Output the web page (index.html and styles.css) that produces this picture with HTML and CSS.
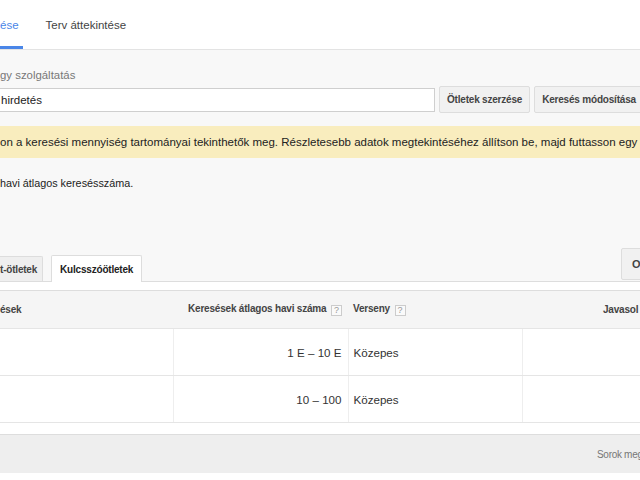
FILE: index.html
```html
<!DOCTYPE html>
<html lang="hu">
<head>
<meta charset="utf-8">
<title>Kulcsszótervező</title>
<link rel="stylesheet" href="styles.css">
</head>
<body>
<div class="topbar">
  <div class="toptab active">ése</div>
  <div class="toptab">Terv áttekintése</div>
</div>
<div class="panel">
  <div class="label">gy szolgáltatás</div>
  <div class="search-row">
    <div class="input">hirdetés</div>
    <div class="btn">Ötletek szerzése</div>
    <div class="btn">Keresés módosítása</div>
  </div>
  <div class="banner">on a keresési mennyiség tartományai tekinthetők meg. Részletesebb adatok megtekintéséhez állítson be, majd futtasson egy</div>
  <div class="info">havi átlagos keresésszáma.</div>
  <div class="tabs">
    <div class="tab">t-ötletek</div>
    <div class="tab current">Kulcsszóötletek</div>
    <div class="spacer"></div>
    <div class="tabbtn">O</div>
  </div>
</div>
<div class="content">
  <table class="grid">
    <colgroup>
      <col class="c1"><col class="c2"><col class="c3"><col class="c4">
    </colgroup>
    <thead>
      <tr>
        <th class="left">ések</th>
        <th class="right">Keresések átlagos havi száma <span class="help">?</span></th>
        <th class="left pad">Verseny <span class="help">?</span></th>
        <th class="left sug">Javasol</th>
      </tr>
    </thead>
    <tbody>
      <tr>
        <td></td>
        <td class="right">1 E – 10 E</td>
        <td class="left pad">Közepes</td>
        <td></td>
      </tr>
      <tr>
        <td></td>
        <td class="right">10 – 100</td>
        <td class="left pad">Közepes</td>
        <td></td>
      </tr>
    </tbody>
  </table>
  <div class="footer">Sorok meg</div>
</div>
</body>
</html>
```

FILE: styles.css
```css
html, body {
  margin: 0;
  padding: 0;
}
body {
  width: 640px;
  height: 480px;
  overflow: hidden;
  background: #ffffff;
  font-family: "Liberation Sans", Arial, sans-serif;
  color: #222;
}

.topbar {
  display: flex;
  height: 49px;
  background: #ffffff;
  border-bottom: 1px solid #e3e3e3;
}
.toptab {
  display: flex;
  align-items: center;
  font-size: 11.5px;
  color: #444;
  white-space: nowrap;
}
.toptab.active {
  color: #4a86e8;
  padding-right: 4px;
  box-shadow: inset 0 -3px 0 #4a86e8;
}
.toptab + .toptab {
  margin-left: 23px;
}

.panel {
  background: #f8f8f8;
  display: flex;
  flex-direction: column;
  white-space: nowrap;
}
.label {
  margin-top: 17px;
  line-height: 16px;
  font-size: 11.4px;
  color: #777;
}
.search-row {
  display: flex;
  gap: 4px;
  height: 27px;
  margin-top: 3px;
}
.input {
  flex-shrink: 0;
  width: 433px;
  margin: 2px 0 1px;
  background: #fff;
  border: 1px solid #cfcfcf;
  border-left: none;
  display: flex;
  align-items: center;
  padding-left: 1px;
  font-size: 11.5px;
  color: #222;
}
.btn {
  flex-shrink: 0;
  display: flex;
  align-items: center;
  padding: 0 7px;
  background: #f1f1f1;
  border: 1px solid #dddddd;
  border-radius: 2px;
  font-size: 10px;
  letter-spacing: -0.2px;
  font-weight: bold;
  color: #444;
}
.banner {
  margin-top: 13px;
  height: 32px;
  background: #f9edbe;
  display: flex;
  align-items: center;
  font-size: 11.5px;
  color: #222;
  overflow: hidden;
}
.info {
  margin-top: 17px;
  line-height: 16px;
  font-size: 10.8px;
  color: #222;
}
.tabs {
  margin-top: 57px;
  height: 33px;
  display: flex;
  align-items: flex-end;
  border-bottom: 1px solid #dddddd;
}
.tab {
  flex-shrink: 0;
  height: 24px;
  display: flex;
  align-items: center;
  background: #efefef;
  border: 1px solid #dddddd;
  border-left: none;
  border-bottom: none;
  padding-right: 5px;
  font-size: 10px;
  letter-spacing: -0.2px;
  font-weight: bold;
  color: #444;
  border-radius: 0 2px 0 0;
}
.tab.current {
  margin-left: 8px;
  height: 26px;
  margin-bottom: -1px;
  background: #ffffff;
  border-left: 1px solid #dddddd;
  padding: 0 8px;
  color: #222;
  border-radius: 2px 2px 0 0;
}
.spacer {
  flex: 1;
}
.tabbtn {
  flex-shrink: 0;
  align-self: stretch;
  margin-bottom: 1px;
  width: 60px;
  display: flex;
  align-items: center;
  padding-left: 10px;
  margin-right: -53px;
  background: #f1f1f1;
  border: 1px solid #dddddd;
  border-radius: 2px;
  font-size: 11px;
  font-weight: bold;
  color: #444;
}

.content {
  padding-top: 8px;
}
.grid {
  width: 640px;
  table-layout: fixed;
  border-collapse: collapse;
  white-space: nowrap;
}
.c1 { width: 173px; }
.c2 { width: 175px; }
.c3 { width: 174px; }
.c4 { width: 118px; }

.grid th {
  height: 37px;
  background: #f5f5f5;
  border-top: 1px solid #dddddd;
  border-bottom: 1px solid #e5e5e5;
  font-size: 10px;
  letter-spacing: -0.2px;
  font-weight: bold;
  color: #444;
  padding: 0;
  overflow: hidden;
}
.grid td {
  height: 46px;
  border-bottom: 1px solid #e5e5e5;
  border-left: 1px solid #eeeeee;
  font-size: 11.6px;
  color: #333;
  padding: 0;
  overflow: hidden;
}
.grid td:first-child {
  border-left: none;
}
.left { text-align: left; }
.right { text-align: right; padding-right: 6px !important; }
.pad { padding-left: 5px !important; }
.sug { padding-left: 81px !important; }

.help {
  display: inline-block;
  width: 9px;
  height: 9px;
  line-height: 9px;
  border: 1px solid #cccccc;
  background: #fafafa;
  font-size: 9px;
  font-weight: normal;
  letter-spacing: 0;
  color: #999;
  text-align: center;
  vertical-align: -1px;
  margin-left: 2px;
}

.footer {
  margin-top: 11px;
  height: 38px;
  background: #eeeeee;
  border-top: 1px solid #dddddd;
  display: flex;
  align-items: center;
  padding-left: 597px;
  font-size: 10px;
  letter-spacing: -0.3px;
  color: #777;
  white-space: nowrap;
  overflow: hidden;
}
```
